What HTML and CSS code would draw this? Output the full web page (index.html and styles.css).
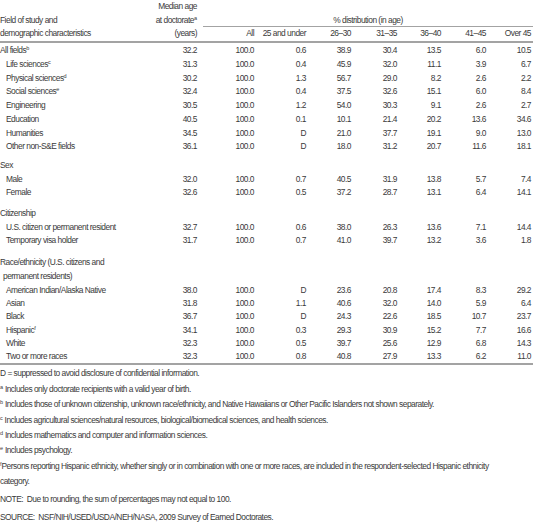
FILE: index.html
```html
<!DOCTYPE html>
<html>
	<head>
		<title>Median age at doctorate by field and demographics</title>
		<link rel="stylesheet" href="styles.css">
	</head>
	<body>
		<table class="stats">
			<colgroup>
				<col style="width: 150px">
				<col style="width: 49px">
				<col style="width: 57px">
				<col style="width: 52px">
				<col style="width: 45px">
				<col style="width: 46px">
				<col style="width: 44px">
				<col style="width: 45px">
				<col style="width: 45px">
			</colgroup>
			<thead>
				<tr class="head">
					<th class="label"></th> <th class="num">Median age</th> <th colspan="7"></th>
				</tr>
				<tr class="head">
					<th class="label">Field of study and</th>
					<th class="num">at doctorate<sup>a</sup></th>
					<th colspan="7" class="dist-cell"><div class="dist">% distribution (in age)</div></th>
				</tr>
				<tr class="head last">
					<th class="label">demographic characteristics</th>
					<th class="num">(years)</th>
					<th class="num">All</th> <th class="num">25 and under</th> <th class="num">26&ndash;30</th>
					<th class="num">31&ndash;35</th> <th class="num">36&ndash;40</th> <th class="num">41&ndash;45</th>
					<th class="num">Over 45</th>
				</tr>
			</thead>
			<tbody>
				<tr class="top"><td>All fields<sup>b</sup></td> <td>32.2</td> <td>100.0</td> <td>0.6</td> <td>38.9</td> <td>30.4</td> <td>13.5</td> <td>6.0</td> <td>10.5</td></tr>
				<tr><td class="ind">Life sciences<sup>c</sup></td> <td>31.3</td> <td>100.0</td> <td>0.4</td> <td>45.9</td> <td>32.0</td> <td>11.1</td> <td>3.9</td> <td>6.7</td></tr>
				<tr><td class="ind">Physical sciences<sup>d</sup></td> <td>30.2</td> <td>100.0</td> <td>1.3</td> <td>56.7</td> <td>29.0</td> <td>8.2</td> <td>2.6</td> <td>2.2</td></tr>
				<tr><td class="ind">Social sciences<sup>e</sup></td> <td>32.4</td> <td>100.0</td> <td>0.4</td> <td>37.5</td> <td>32.6</td> <td>15.1</td> <td>6.0</td> <td>8.4</td></tr>
				<tr><td class="ind">Engineering</td> <td>30.5</td> <td>100.0</td> <td>1.2</td> <td>54.0</td> <td>30.3</td> <td>9.1</td> <td>2.6</td> <td>2.7</td></tr>
				<tr><td class="ind">Education</td> <td>40.5</td> <td>100.0</td> <td>0.1</td> <td>10.1</td> <td>21.4</td> <td>20.2</td> <td>13.6</td> <td>34.6</td></tr>
				<tr><td class="ind">Humanities</td> <td>34.5</td> <td>100.0</td> <td>D</td> <td>21.0</td> <td>37.7</td> <td>19.1</td> <td>9.0</td> <td>13.0</td></tr>
				<tr><td class="ind">Other non-S&amp;E fields</td> <td>36.1</td> <td>100.0</td> <td>D</td> <td>18.0</td> <td>31.2</td> <td>20.7</td> <td>11.6</td> <td>18.1</td></tr>

				<tr class="sec s1"><td colspan="9">Sex</td></tr>
				<tr><td class="ind">Male</td> <td>32.0</td> <td>100.0</td> <td>0.7</td> <td>40.5</td> <td>31.9</td> <td>13.8</td> <td>5.7</td> <td>7.4</td></tr>
				<tr><td class="ind">Female</td> <td>32.6</td> <td>100.0</td> <td>0.5</td> <td>37.2</td> <td>28.7</td> <td>13.1</td> <td>6.4</td> <td>14.1</td></tr>

				<tr class="sec s2"><td colspan="9">Citizenship</td></tr>
				<tr><td class="ind">U.S. citizen or permanent resident</td> <td>32.7</td> <td>100.0</td> <td>0.6</td> <td>38.0</td> <td>26.3</td> <td>13.6</td> <td>7.1</td> <td>14.4</td></tr>
				<tr><td class="ind">Temporary visa holder</td> <td>31.7</td> <td>100.0</td> <td>0.7</td> <td>41.0</td> <td>39.7</td> <td>13.2</td> <td>3.6</td> <td>1.8</td></tr>

				<tr class="sec s3"><td colspan="9">Race/ethnicity (U.S. citizens and</td></tr>
				<tr class="sub"><td colspan="9" class="half">permanent residents)</td></tr>
				<tr class="tight"><td class="ind">American Indian/Alaska Native</td> <td>38.0</td> <td>100.0</td> <td>D</td> <td>23.6</td> <td>20.8</td> <td>17.4</td> <td>8.3</td> <td>29.2</td></tr>
				<tr class="tight"><td class="ind">Asian</td> <td>31.8</td> <td>100.0</td> <td>1.1</td> <td>40.6</td> <td>32.0</td> <td>14.0</td> <td>5.9</td> <td>6.4</td></tr>
				<tr class="tight"><td class="ind">Black</td> <td>36.7</td> <td>100.0</td> <td>D</td> <td>24.3</td> <td>22.6</td> <td>18.5</td> <td>10.7</td> <td>23.7</td></tr>
				<tr class="tight"><td class="ind">Hispanic<sup>f</sup></td> <td>34.1</td> <td>100.0</td> <td>0.3</td> <td>29.3</td> <td>30.9</td> <td>15.2</td> <td>7.7</td> <td>16.6</td></tr>
				<tr class="tight"><td class="ind">White</td> <td>32.3</td> <td>100.0</td> <td>0.5</td> <td>39.7</td> <td>25.6</td> <td>12.9</td> <td>6.8</td> <td>14.3</td></tr>
				<tr class="tight end"><td class="ind">Two or more races</td> <td>32.3</td> <td>100.0</td> <td>0.8</td> <td>40.8</td> <td>27.9</td> <td>13.3</td> <td>6.2</td> <td>11.0</td></tr>
			</tbody>
		</table>

		<div class="notes">
			<p>D = suppressed to avoid disclosure of confidential information.</p>
			<p><sup>a</sup> Includes only doctorate recipients with a valid year of birth.</p>
			<p><sup>b</sup> Includes those of unknown citizenship, unknown race/ethnicity, and Native Hawaiians or Other Pacific Islanders not shown separately.</p>
			<p><sup>c</sup> Includes agricultural sciences/natural resources, biological/biomedical sciences, and health sciences.</p>
			<p><sup>d</sup> Includes mathematics and computer and information sciences.</p>
			<p><sup>e</sup> Includes psychology.</p>
			<p class="wrap"><sup>f</sup>Persons reporting Hispanic ethnicity, whether singly or in combination with one or more races, are included in the respondent-selected Hispanic ethnicity category.</p>
			<p class="note">NOTE:&nbsp; Due to rounding, the sum of percentages may not equal to 100.</p>
			<p class="source">SOURCE:&nbsp; NSF/NIH/USED/USDA/NEH/NASA, 2009 Survey of Earned Doctorates.</p>
		</div>
	</body>
</html>
```

FILE: styles.css
```css
body {
	margin: 0;
	background: #ffffff;
	color: #3a3a3a;
	font-family: "Liberation Sans", Arial, sans-serif;
	font-size: 8.4px;
	letter-spacing: -0.5px;
}
sup {
	font-size: 5.5px;
	line-height: 0;
	vertical-align: 3px;
	letter-spacing: 0;
}

/* table */
.stats {
	width: 533px;
	border-collapse: collapse;
	table-layout: fixed;
}
.stats th, .stats td {
	padding: 0 2px 0 0;
	font-weight: normal;
	white-space: nowrap;
	text-align: right;
	vertical-align: middle;
}
.stats th.label {
	text-align: left;
}
.head th {
	height: 13.5px;
	line-height: 13.5px;
}
.head.last th {
	border-bottom: 2px solid #a3a3a3;
}
.stats th.dist-cell {
	vertical-align: top;
	padding: 0;
}
.dist {
	margin-left: 4px;
	text-align: center;
	line-height: 12.5px;
	border-bottom: 1px solid #a3a3a3;
}
.stats td {
	height: 13.7px;
	line-height: 13.7px;
}
.stats td:first-child {
	text-align: left;
}
.stats td.ind {
	padding-left: 6px;
}
.stats td.half {
	padding-left: 3px;
}
.stats .top td {
	height: 15.5px;
	vertical-align: bottom;
}
.tight td {
	height: 13.3px;
	line-height: 13.3px;
}
.end td {
	border-bottom: 2px solid #a3a3a3;
}
.sec td {
	vertical-align: bottom;
}
.s1 td { height: 18.7px; }
.s2 td { height: 20.5px; }
.s3 td { height: 22px; }

/* footnotes */
.notes {
	width: 500px;
	margin-top: 1px;
}
.notes p {
	margin: 0;
	line-height: 15.4px;
	white-space: nowrap;
}
.notes p.wrap {
	white-space: normal;
}
.notes .note {
	margin-top: 2px;
}
.notes .source {
	margin-top: 3px;
}
```
